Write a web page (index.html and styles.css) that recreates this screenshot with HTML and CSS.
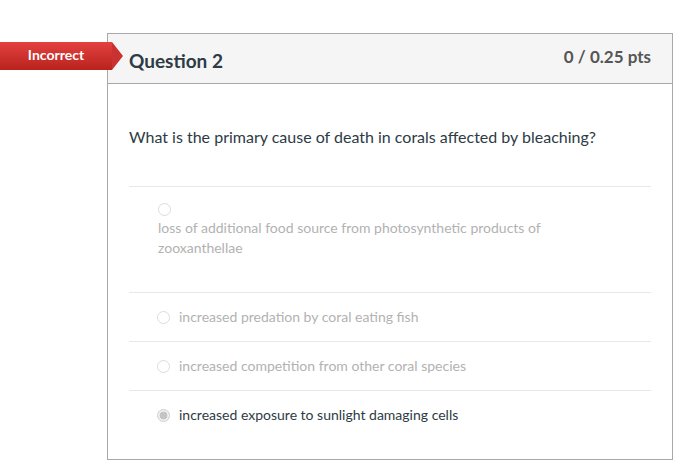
FILE: index.html
```html
<!DOCTYPE html>
<html>
<head>
<meta charset="utf-8">
<link rel="stylesheet" href="styles.css">
</head>
<body>
<div class="page">
  <div class="badge">Incorrect</div>
  <div class="card">
    <div class="header">
      <span class="title">Question 2</span>
      <span class="pts">0 / 0.25 pts</span>
    </div>
    <div class="body">
      <p class="question">What is the primary cause of death in corals affected by bleaching?</p>
      <div class="answers">
        <div class="answer stacked">
          <span class="radio"></span>
          <span class="text">loss of additional food source from photosynthetic products of zooxanthellae</span>
        </div>
        <div class="answer">
          <span class="radio"></span>
          <span class="text">increased predation by coral eating fish</span>
        </div>
        <div class="answer">
          <span class="radio"></span>
          <span class="text">increased competition from other coral species</span>
        </div>
        <div class="answer selected">
          <span class="radio"></span>
          <span class="text">increased exposure to sunlight damaging cells</span>
        </div>
      </div>
    </div>
  </div>
</div>
</body>
</html>
```

FILE: styles.css
```css
html, body {
  margin: 0;
  padding: 0;
  background: #fff;
}
body {
  font-family: Lato, "Open Sans", sans-serif;
  color: #2d3b45;
}
.page {
  position: relative;
  padding: 33px 0 0 107px;
}
.badge {
  position: absolute;
  left: 0;
  top: 42px;
  width: 112px;
  height: 28px;
  line-height: 26px;
  text-align: center;
  color: #fff;
  font-weight: 700;
  font-size: 14px;
  background: linear-gradient(#e3423f, #b9221e);
  z-index: 2;
}
.badge::after {
  content: "";
  position: absolute;
  left: 112px;
  top: 0;
  width: 0;
  height: 0;
  border-top: 14px solid transparent;
  border-bottom: 14px solid transparent;
  border-left: 11px solid #c93230;
}
.card {
  width: 566px;
  box-sizing: border-box;
  border: 1px solid #a8a8a8;
}
.header {
  height: 50px;
  box-sizing: border-box;
  background: #f5f5f5;
  border-bottom: 1px solid #a8a8a8;
  display: flex;
  justify-content: space-between;
  align-items: center;
  padding: 0 21px;
}
.title {
  font-size: 19px;
  font-weight: 700;
  color: #2d3b45;
  margin-top: 3px;
}
.pts {
  font-size: 17px;
  font-weight: 700;
  color: #555;
  margin-top: -5px;
}
.body {
  padding: 41px 21px 22px 21px;
}
.question {
  margin: 0;
  font-size: 16px;
  line-height: 24px;
  padding-bottom: 37px;
  border-bottom: 1px solid #e8e8e8;
}
.answer {
  display: flex;
  align-items: center;
  padding: 14px 0 14px 28px;
  font-size: 14px;
  line-height: 20px;
  color: #b2b2b2;
  border-bottom: 1px solid #e8e8e8;
}
.answer:last-child {
  border-bottom: none;
  padding-bottom: 12px;
}
.answer.stacked {
  flex-direction: column;
  align-items: flex-start;
  padding: 16px 0 34px 29px;
}
.answer.stacked .text {
  width: 420px;
  margin-left: 0;
  margin-top: 2px;
}
.radio {
  width: 13px;
  height: 13px;
  box-sizing: border-box;
  border: 1px solid #dcdcdc;
  border-radius: 50%;
  background: #fff;
  flex: none;
}
.text {
  margin-left: 9px;
}
.selected {
  color: #2d3b45;
}
.selected .radio {
  border: 1px solid #cfcfcf;
  background: radial-gradient(circle, #c4c4c4 0 3.6px, #f0f0f0 4.2px);
}
```
